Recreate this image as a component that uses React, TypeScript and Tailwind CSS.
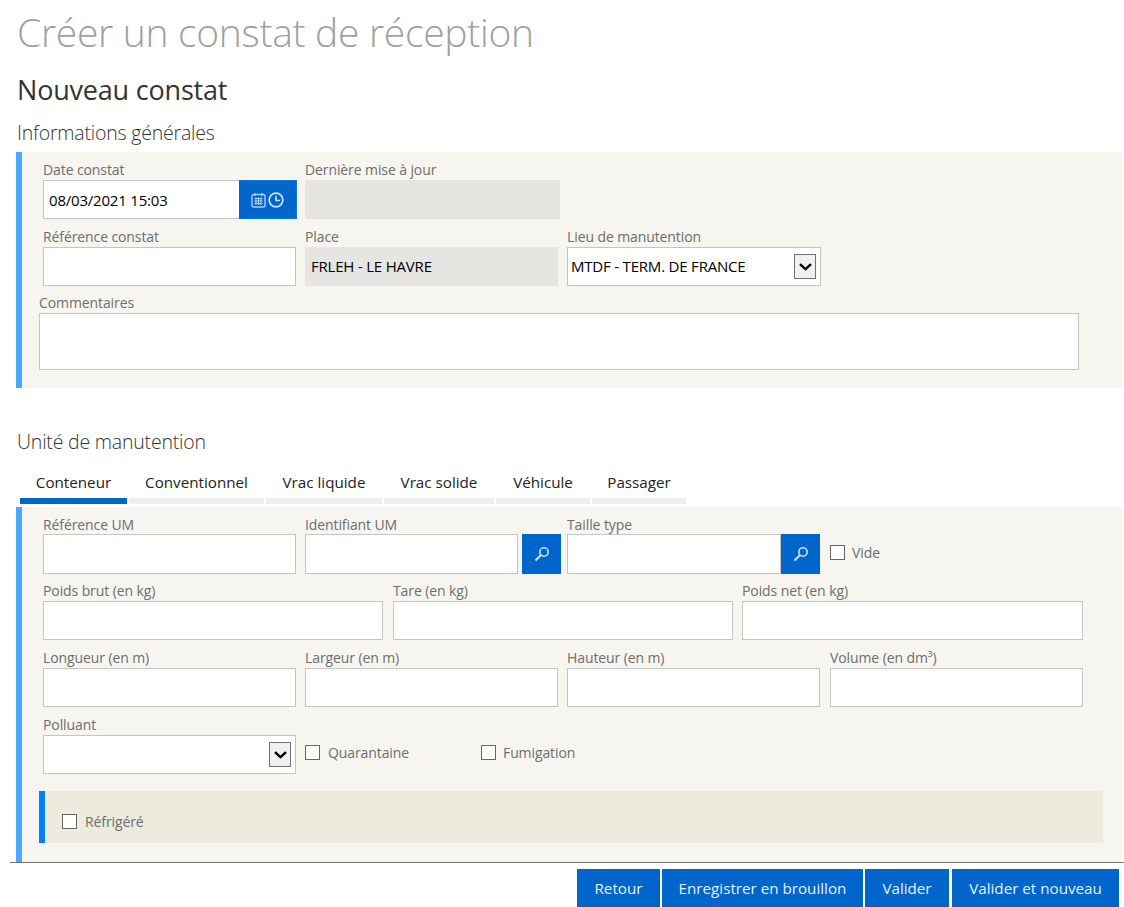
const font = "font-['Open_Sans','Noto_Sans',sans-serif]"

function Label({ children, className = "" }: { children: React.ReactNode; className?: string }) {
  return <div className={`h-[19px] text-[14px] leading-[17px] tracking-[-0.1px] text-[#6e6e6e] whitespace-nowrap ${className}`}>{children}</div>
}

function TextBox({ className = "", value = "" }: { className?: string; value?: string }) {
  return (
    <input
      readOnly
      defaultValue={value}
      className={`h-[39px] w-full min-w-0 border border-[#c4c4c4] bg-white px-[5px] text-[15px] tracking-[-0.2px] text-black outline-none ${className}`}
    />
  )
}

function Field({ label, className = "", value, h }: { label: string; className?: string; value?: string; h?: string }) {
  return (
    <div className={className}>
      <Label>{label}</Label>
      <TextBox value={value} className={h} />
    </div>
  )
}

function Chevron() {
  return (
    <svg width="13" height="8" viewBox="0 0 13 8" fill="none">
      <path d="M1 1.2l5.5 5 5.5-5" stroke="black" strokeWidth="2.4" />
    </svg>
  )
}

function Select({ value = "", className = "" }: { value?: string; className?: string }) {
  return (
    <div className={`flex h-[39px] items-center justify-between border border-[#c4c4c4] bg-white pl-[3px] pr-[4px] text-[15px] tracking-[-0.2px] text-black ${className}`}>
      <span className="whitespace-nowrap">{value}</span>
      <span className="flex h-[25px] w-[22px] items-center justify-center border border-[#707070] bg-[#f0f0f0]">
        <Chevron />
      </span>
    </div>
  )
}

function SearchIcon() {
  return (
    <svg width="16" height="16" viewBox="0 0 16 16" fill="none">
      <circle cx="10" cy="6" r="4.2" stroke="#cfe3f7" strokeWidth="1.6" />
      <path d="M7 9L1.5 14.5" stroke="#cfe3f7" strokeWidth="2.2" />
    </svg>
  )
}

function Check({ label, className = "" }: { label: string; className?: string }) {
  return (
    <div className={`flex items-center gap-[8px] ${className}`}>
      <span className="h-[15px] w-[15px] border border-[#666666] bg-white" />
      <span className="text-[14px] tracking-[-0.1px] text-[#6e6e6e] whitespace-nowrap">{label}</span>
    </div>
  )
}

const tabs = [
  { name: "Conteneur", w: "w-[107px]", active: true },
  { name: "Conventionnel", w: "w-[135px]" },
  { name: "Vrac liquide", w: "w-[116px]" },
  { name: "Vrac solide", w: "w-[110px]" },
  { name: "Véhicule", w: "w-[94px]" },
  { name: "Passager", w: "w-[94px]" },
]

const buttons = [
  { name: "Retour", w: "w-[83px]" },
  { name: "Enregistrer en brouillon", w: "w-[201px]" },
  { name: "Valider", w: "w-[84px]" },
  { name: "Valider et nouveau", w: "ml-[1px] w-[167px]" },
]

export default function App() {
  return (
    <div className={`h-[907px] w-[1124px] overflow-hidden bg-white ${font}`}>
      <h1 className="ml-[17px] h-[69px] pt-[7px] text-[39px] font-light leading-[50px] tracking-[-0.3px] text-[#a0a0a0] whitespace-nowrap">Créer un constat de réception</h1>
      <h2 className="ml-[17px] h-[41px] text-[27px] font-normal leading-[41px] tracking-[-0.2px] text-[#333333]">Nouveau constat</h2>
      <h3 className="ml-[17px] h-[42px] pt-[9px] text-[19.5px] font-light leading-[28px] tracking-[-0.2px] text-[#333333]">Informations générales</h3>

      <section className="ml-4 mr-[2px] h-[236px] border-l-[6px] border-[#4da6ff] bg-[#f6f5ef] pt-[9px]">
        <div className="ml-[21px] flex gap-[8px]">
          <div className="w-[254px]">
            <Label>Date constat</Label>
            <div className="flex">
              <TextBox value="08/03/2021 15:03" className="!w-[195px] !border-r-0" />
              <div className="flex h-[39px] w-[59px] items-center justify-center gap-[2px] border border-[#0a7ae0] border-l-white bg-[#0066cc]">
                <svg width="15" height="16" viewBox="0 0 15 16" fill="none">
                  <rect x="1" y="2.5" width="13" height="12.5" rx="1.5" stroke="#a9cdf0" strokeWidth="1.4" />
                  <path d="M4 1v3M11 1v3" stroke="#a9cdf0" strokeWidth="1.4" />
                  <path d="M3.5 6.5h8M3.5 9h8M3.5 11.5h8M5 5.5v7.5M7.5 5.5v7.5M10 5.5v7.5" stroke="#a9cdf0" strokeWidth="1.1" />
                </svg>
                <svg width="16" height="16" viewBox="0 0 16 16" fill="none">
                  <circle cx="8" cy="8" r="6.8" stroke="#cfe3f7" strokeWidth="1.7" />
                  <path d="M8 3.8V8.5H12" stroke="#cfe3f7" strokeWidth="1.6" />
                </svg>
              </div>
            </div>
          </div>
          <div className="w-[255px]">
            <Label>Dernière mise à jour</Label>
            <div className="h-[39px] bg-[#e6e5e1]" />
          </div>
        </div>

        <div className="ml-[21px] mt-[9px] flex gap-[9px]">
          <Field label="Référence constat" className="w-[253px]" />
          <div className="w-[253px]">
            <Label>Place</Label>
            <div className="flex h-[39px] items-center bg-[#e6e5e1] pl-[6px] text-[15px] tracking-[-0.2px] text-black">FRLEH - LE HAVRE</div>
          </div>
          <div className="w-[254px]">
            <Label>Lieu de manutention</Label>
            <Select value="MTDF - TERM. DE FRANCE" />
          </div>
        </div>

        <div className="ml-[17px] mt-[8px] w-[1040px]">
          <Label>Commentaires</Label>
          <textarea readOnly className="block h-[57px] w-full resize-none border border-[#c4c4c4] bg-white outline-none" />
        </div>
      </section>

      <h3 className="ml-[17px] mt-[40px] h-[29px] text-[19.5px] font-light leading-[28px] tracking-[-0.2px] text-[#333333]">Unité de manutention</h3>

      <nav className="ml-5 mt-[14px] flex gap-[2px]">
        {tabs.map((t) => (
          <div
            key={t.name}
            className={`h-[33px] border-b-[6px] text-center text-[15.2px] leading-[22px] text-[#222222] ${t.w} ${t.active ? "border-[#0066cc]" : "border-[#eeeeee]"}`}
          >
            {t.name}
          </div>
        ))}
      </nav>

      <section className="ml-4 mr-[2px] mt-[3px] h-[355px] border-l-[6px] border-[#4da6ff] bg-[#f6f5ef] pt-[9px]">
        <div className="ml-[21px] flex">
          <div className="w-[253px]">
            <Label className="!h-[18px]">Référence UM</Label>
            <TextBox className="!h-[40px]" />
          </div>
          <div className="ml-[9px] w-[256px]">
            <Label className="!h-[18px]">Identifiant UM</Label>
            <div className="flex gap-[4px]">
              <TextBox className="!h-[40px] !w-[213px]" />
              <div className="flex h-[40px] w-[39px] items-center justify-center bg-[#0066cc]"><SearchIcon /></div>
            </div>
          </div>
          <div className="ml-[6px] w-[253px]">
            <Label className="!h-[18px]">Taille type</Label>
            <div className="flex">
              <TextBox className="!h-[40px] !w-[214px]" />
              <div className="flex h-[40px] w-[39px] items-center justify-center bg-[#0066cc]"><SearchIcon /></div>
            </div>
          </div>
          <Check label="Vide" className="ml-[10px] mt-[26px] h-[20px] !gap-[7px]" />
        </div>

        <div className="ml-[21px] mt-[8px] flex gap-[10px]">
          <Field label="Poids brut (en kg)" className="w-[340px]" />
          <Field label="Tare (en kg)" className="w-[340px]" />
          <Field label="Poids net (en kg)" className="ml-[-1px] w-[341px]" />
        </div>

        <div className="ml-[21px] mt-[9px] flex gap-[9px]">
          <Field label="Longueur (en m)" className="w-[253px]" />
          <Field label="Largeur (en m)" className="w-[253px]" />
          <Field label="Hauteur (en m)" className="w-[253px]" />
          <Field label="Volume (en dm³)" className="ml-[1px] w-[253px]" />
        </div>

        <div className="ml-[21px] mt-[9px] flex gap-[9px]">
          <div className="w-[253px]">
            <Label>Polluant</Label>
            <Select />
          </div>
          <Check label="Quarantaine" className="mt-[26px] h-[20px] w-[176px]" />
          <Check label="Fumigation" className="mt-[26px] h-[20px] -ml-[9px] !gap-[7px]" />
        </div>

        <div className="ml-[17px] mt-[17px] flex h-[52px] w-[1064px] items-center border-l-[6px] border-[#0080ff] bg-[#ecebdd] pl-[17px] pt-[9px]">
          <Check label="Réfrigéré" />
        </div>
      </section>

      <footer className="ml-[10px] flex justify-end gap-[2px] border-t border-[#707070] pr-[5px] pt-[6px]">
        {buttons.map((b) => (
          <div key={b.name} className={`flex h-[38px] items-center justify-center bg-[#0066cc] pt-[1px] text-[15.2px] text-[#e6f0fa] ${b.w}`}>
            {b.name}
          </div>
        ))}
      </footer>
    </div>
  )
}
